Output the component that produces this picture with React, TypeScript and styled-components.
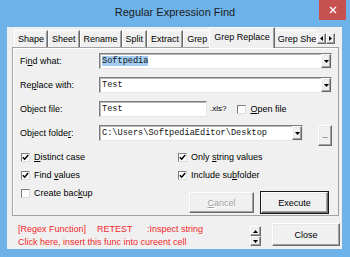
import styled, { createGlobalStyle, css } from "styled-components";

const GlobalStyle = createGlobalStyle`
  html, body {
    margin: 0;
    padding: 0;
  }

  body {
    width: 350px;
    height: 257px;
    overflow: hidden;
    font-family: "Liberation Sans", Arial, sans-serif;
    font-size: 9px;
    color: #000;
  }
`;

const _mixinRaised = css`
  box-sizing: border-box;
  background: #f0f0f0;
  border: 1px solid;
  border-color: #ffffff #6b6b6b #6b6b6b #ffffff;
  box-shadow: inset -1px -1px #a0a0a0, inset 1px 1px #e8e8e8;
`;

const _mixinSunken = css`
  box-sizing: border-box;
  background: #fff;
  border: 1px solid;
  border-color: #7d7d7d #e6e6e6 #e6e6e6 #7d7d7d;
  box-shadow: inset 1px 1px #b9b9b9;
`;

const Window = styled.div`
  width: 350px;
  height: 257px;
  display: flex;
  flex-direction: column;
  background: #6db3e9;
`;

const TitleBar = styled.div`
  height: 27px;
  flex-shrink: 0;
  display: grid;
  grid-template-columns: 1fr auto 1fr;
  align-items: start;
`;

const Title = styled.div`
  grid-column: 2;
  padding-top: 6px;
  font-size: 11px;
  color: #1b1b1b;
`;

const CloseBox = styled.div`
  grid-column: 3;
  justify-self: end;
  margin-right: 4px;
  width: 27px;
  height: 20px;
  background: #c75050;
  display: flex;
  align-items: center;
  justify-content: center;
`;

const Frame = styled.div`
  flex: 1;
  display: flex;
  padding: 0 8px 8px 7px;
  min-height: 0;
  min-width: 0;
`;

const Client = styled.div`
  flex: 1;
  min-width: 0;
  display: flex;
  flex-direction: column;
  background: #f0f0f0;
`;

const TabStrip = styled.div`
  height: 21px;
  display: flex;
  align-items: flex-end;
  margin: 0 3px -1px 5px;
  position: relative;
  z-index: 1;
  min-width: 0;
`;

const TabsViewport = styled.div`
  flex: 1;
  min-width: 0;
  display: flex;
  align-items: flex-end;
  height: 21px;
  overflow: hidden;
  padding-left: 2px;
`;

const Tab = styled.div<{ $active?: boolean }>`
  box-sizing: border-box;
  flex-shrink: 0;
  height: ${({ $active }) => ($active ? 21 : 17)}px;
  padding: ${({ $active }) => ($active ? "3px 4px 0" : "2px 3px 0")};
  margin: ${({ $active }) => ($active ? "0 -1px 0 -2px" : "0 0 1px")};
  background: #f0f0f0;
  border-left: 1px solid #fff;
  border-top: 1px solid #fff;
  border-right: 1px solid #6b6b6b;
  box-shadow: inset -1px 0 #a0a0a0;
  line-height: 12px;
  white-space: nowrap;
  position: relative;
  z-index: ${({ $active }) => ($active ? 2 : 1)};
`;

const ScrollArrows = styled.div`
  display: flex;
  flex-shrink: 0;
  margin: 0 4px 4px 1px;
`;

const ArrowButton = styled.div`
  ${_mixinRaised}
  width: 9px;
  height: 11px;
  display: flex;
  align-items: center;
  justify-content: center;
`;

const Panel = styled.div`
  box-sizing: border-box;
  height: 170px;
  margin: 0 3px 0 5px;
  padding: 5px 6px 0 7px;
  border: 1px solid #a3a3a3;
  box-shadow: inset 1px 1px #fff;
  display: flex;
  flex-direction: column;
  gap: 8px;
`;

const FieldRow = styled.div`
  height: 16px;
  display: flex;
  align-items: flex-start;
  flex-shrink: 0;
`;

const Label = styled.div`
  width: 79px;
  flex-shrink: 0;
  line-height: 16px;
  white-space: nowrap;
`;

const TextBox = styled.div<{ $width?: number }>`
  ${_mixinSunken}
  height: 16px;
  ${({ $width }) => ($width ? `width: ${$width}px; flex-shrink: 0;` : "flex: 1; min-width: 0;")}
  display: flex;
  align-items: center;
  padding: 0 0 0 2px;
  font-family: "Liberation Mono", "Courier New", monospace;
  font-size: 8.6px;
  color: #111;
  overflow: hidden;
  white-space: nowrap;
`;

const TextValue = styled.span`
  flex: 1;
  min-width: 0;
  overflow: hidden;
`;

const Selected = styled.span`
  background: #a4cdf1;
  padding: 1px 0;
`;

const DropButton = styled.div`
  ${_mixinRaised}
  width: 10px;
  height: 14px;
  display: flex;
  align-items: center;
  justify-content: center;
  flex-shrink: 0;
`;

const Hint = styled.span`
  margin-left: 3px;
  line-height: 16px;
  font-size: 8px;
`;

const Check = styled.span`
  box-sizing: border-box;
  width: 9px;
  height: 9px;
  flex-shrink: 0;
  background: #fff;
  border: 1px solid;
  border-color: #7d7d7d #dcdcdc #dcdcdc #7d7d7d;
  display: flex;
  align-items: center;
  justify-content: center;
`;

const CheckItem = styled.label<{ $offset?: number }>`
  display: flex;
  align-items: center;
  gap: 4px;
  margin-left: ${({ $offset }) => $offset ?? 1}px;
  white-space: nowrap;
`;

const DotsButton = styled.div`
  ${_mixinRaised}
  width: 16px;
  height: 21px;
  margin-left: 15px;
  display: flex;
  align-items: flex-end;
  justify-content: center;
  padding-bottom: 5px;
  font-size: 8px;
  letter-spacing: -0.5px;
`;

const Options = styled.div`
  display: grid;
  grid-template-columns: 157px 1fr;
  grid-auto-rows: 18px;
  margin-top: -1px;
`;

const OptionCell = styled.div`
  display: flex;
  align-items: center;
`;

const ButtonRow = styled.div`
  display: flex;
  gap: 7px;
  margin: 8px 0 0 12px;
  align-self: flex-start;
`;

const PushButton = styled.div<{ $width: number; $default?: boolean; $disabled?: boolean }>`
  ${_mixinRaised}
  width: ${({ $width }) => $width}px;
  height: 21px;
  flex-shrink: 0;
  display: flex;
  align-items: center;
  justify-content: center;
  color: ${({ $disabled }) => ($disabled ? "#a0a0a0" : "#000")};
  text-shadow: ${({ $disabled }) => ($disabled ? "1px 1px #fff" : "none")};

  ${({ $default }) =>
    $default &&
    css`
      outline: 1px solid #1a1a1a;
      outline-offset: 0;
    `}
`;

const Footer = styled.div`
  flex: 1;
  display: flex;
  align-items: flex-start;
  padding: 7px 2px 0 11px;
  min-width: 0;
`;

const InfoText = styled.div`
  flex: 1;
  min-width: 0;
  color: #f0282d;
  line-height: 13px;
  white-space: nowrap;
  overflow: hidden;
`;

const InfoCell = styled.span<{ $width?: number }>`
  display: inline-block;
  ${({ $width }) => ($width ? `width: ${$width}px;` : "")}
`;

const Spin = styled.div`
  display: flex;
  flex-direction: column;
  flex-shrink: 0;
  margin-top: 3px;
  width: 11px;
`;

const SpinButton = styled.div`
  ${_mixinRaised}
  height: 10px;
  display: flex;
  align-items: center;
  justify-content: center;
`;

const CloseButton = styled.div`
  ${_mixinRaised}
  width: 68px;
  height: 23px;
  flex-shrink: 0;
  margin-left: 11px;
  display: flex;
  align-items: center;
  justify-content: center;
`;

const Key = styled.span`
  text-decoration: underline;
  text-underline-offset: 1px;
`;

function Tri({ dir }: { dir: "down" | "up" | "left" | "right" }) {
  const points = {
    down: "0,0 5,0 2.5,3",
    up: "0,3 5,3 2.5,0",
    left: "3,0 3,5 0,2.5",
    right: "0,0 0,5 3,2.5",
  }[dir];
  const horizontal = dir === "left" || dir === "right";
  return (
    <svg width={horizontal ? 3 : 5} height={horizontal ? 5 : 3} viewBox={horizontal ? "0 0 3 5" : "0 0 5 3"}>
      <polygon points={points} fill="#000" />
    </svg>
  );
}

function CheckBox({ checked }: { checked?: boolean }) {
  return (
    <Check>
      {checked && (
        <svg width="7" height="7" viewBox="0 0 7 7">
          <path d="M0.8 3.2 L2.7 5.2 L6.2 1" stroke="#000" strokeWidth="1.5" fill="none" />
        </svg>
      )}
    </Check>
  );
}

function Combo({ children, width }: { children: React.ReactNode; width?: number }) {
  return (
    <TextBox $width={width}>
      <TextValue>{children}</TextValue>
      <DropButton>
        <Tri dir="down" />
      </DropButton>
    </TextBox>
  );
}

const tabs = ["Shape", "Sheet", "Rename", "Split", "Extract", "Grep", "Grep Replace", "Grep Sheet"];

export default function App() {
  return (
    <>
      <GlobalStyle />
      <Window>
        <TitleBar>
          <Title>Regular Expression Find</Title>
          <CloseBox>
            <svg width="8" height="8" viewBox="0 0 8 8">
              <path d="M1 1 L7 7 M7 1 L1 7" stroke="#fff" strokeWidth="1.4" />
            </svg>
          </CloseBox>
        </TitleBar>

        <Frame>
          <Client>
            <TabStrip>
              <TabsViewport>
                {tabs.map((tab) => (
                  <Tab key={tab} $active={tab === "Grep Replace"}>
                    {tab}
                  </Tab>
                ))}
              </TabsViewport>
              <ScrollArrows>
                <ArrowButton>
                  <Tri dir="left" />
                </ArrowButton>
                <ArrowButton>
                  <Tri dir="right" />
                </ArrowButton>
              </ScrollArrows>
            </TabStrip>

            <Panel>
              <FieldRow>
                <Label>
                  Fi<Key>n</Key>d what:
                </Label>
                <Combo>
                  <Selected>Softpedia</Selected>
                </Combo>
              </FieldRow>

              <FieldRow>
                <Label>
                  Re<Key>p</Key>lace with:
                </Label>
                <Combo>Test</Combo>
              </FieldRow>

              <FieldRow>
                <Label>Object file:</Label>
                <TextBox $width={108}>Test</TextBox>
                <Hint>.xls?</Hint>
                <CheckItem $offset={11}>
                  <CheckBox />
                  <span style={{ lineHeight: "16px" }}>
                    <Key>O</Key>pen file
                  </span>
                </CheckItem>
              </FieldRow>

              <FieldRow>
                <Label>
                  Object folde<Key>r</Key>:
                </Label>
                <Combo width={204}>C:\Users\SoftpediaEditor\Desktop</Combo>
                <DotsButton>...</DotsButton>
              </FieldRow>

              <Options>
                <OptionCell>
                  <CheckItem>
                    <CheckBox checked />
                    <span>
                      <Key>D</Key>istinct case
                    </span>
                  </CheckItem>
                </OptionCell>
                <OptionCell>
                  <CheckItem>
                    <CheckBox checked />
                    <span>
                      Only <Key>s</Key>tring values
                    </span>
                  </CheckItem>
                </OptionCell>
                <OptionCell>
                  <CheckItem>
                    <CheckBox checked />
                    <span>
                      Find <Key>v</Key>alues
                    </span>
                  </CheckItem>
                </OptionCell>
                <OptionCell>
                  <CheckItem>
                    <CheckBox checked />
                    <span>
                      Include su<Key>b</Key>folder
                    </span>
                  </CheckItem>
                </OptionCell>
                <OptionCell>
                  <CheckItem>
                    <CheckBox />
                    <span>
                      Create bac<Key>k</Key>up
                    </span>
                  </CheckItem>
                </OptionCell>
                <OptionCell>
                  <ButtonRow>
                    <PushButton $width={65} $disabled>
                      <span>
                        <Key>C</Key>ancel
                      </span>
                    </PushButton>
                    <PushButton $width={67} $default>
                      Execute
                    </PushButton>
                  </ButtonRow>
                </OptionCell>
              </Options>
            </Panel>

            <Footer>
              <InfoText>
                <div>
                  <InfoCell $width={79}>[Regex Function]</InfoCell>
                  <InfoCell $width={50}>RETEST</InfoCell>
                  <InfoCell>:Inspect string</InfoCell>
                </div>
                <div>Click here, insert this func into cureent cell</div>
              </InfoText>
              <Spin>
                <SpinButton>
                  <Tri dir="up" />
                </SpinButton>
                <SpinButton>
                  <Tri dir="down" />
                </SpinButton>
              </Spin>
              <CloseButton>Close</CloseButton>
            </Footer>
          </Client>
        </Frame>
      </Window>
    </>
  );
}
